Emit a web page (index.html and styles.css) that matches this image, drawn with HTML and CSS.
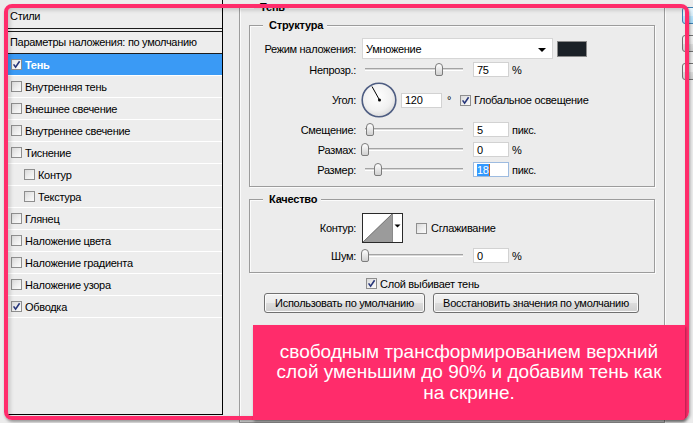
FILE: index.html
```html
<!DOCTYPE html>
<html lang="ru">
<head>
<meta charset="utf-8">
<title>Стиль слоя</title>
<link rel="stylesheet" href="styles.css">
</head>
<body>
<div class="dialog">
  <aside class="styles">
    <div class="styles-head">Стили</div>
    <div class="styles-rule"></div>
    <div class="styles-blend">Параметры наложения: по умолчанию</div>
    <ul class="fx-list">
      <li class="fx selected"><span class="cb"><svg viewBox="0 0 9 9" width="9" height="9"><path d="M1.6 4.4 L3.6 7.2 L7.6 1.2" class="tick"/></svg></span>Тень</li>
      <li class="fx"><span class="cb"></span>Внутренняя тень</li>
      <li class="fx"><span class="cb"></span>Внешнее свечение</li>
      <li class="fx"><span class="cb"></span>Внутреннее свечение</li>
      <li class="fx"><span class="cb"></span>Тиснение</li>
      <li class="fx sub"><span class="cb"></span>Контур</li>
      <li class="fx sub"><span class="cb"></span>Текстура</li>
      <li class="fx"><span class="cb"></span>Глянец</li>
      <li class="fx"><span class="cb"></span>Наложение цвета</li>
      <li class="fx"><span class="cb"></span>Наложение градиента</li>
      <li class="fx"><span class="cb"></span>Наложение узора</li>
      <li class="fx"><span class="cb"><svg viewBox="0 0 9 9" width="9" height="9"><path d="M1.6 4.4 L3.6 7.2 L7.6 1.2" class="tick"/></svg></span>Обводка</li>
    </ul>
  </aside>

  <main class="settings">
    <section class="group outer">
      <div class="group-title outer-title">Тень</div>

      <section class="group inner structure">
        <div class="group-title">Структура</div>

        <div class="row row-blend">
          <span class="lbl">Режим наложения:</span>
          <div class="select"><span class="select-text">Умножение</span><span class="arrow"></span></div>
          <div class="swatch"></div>
        </div>

        <div class="row row-field row-opacity">
          <span class="lbl">Непрозр.:</span>
          <div class="slider"><div class="track"></div><div class="thumb" style="left:75.5%"></div></div>
          <div class="num">75</div><span class="unit">%</span>
        </div>

        <div class="row row-angle">
          <span class="lbl">Угол:</span>
          <svg class="dial" viewBox="0 0 36 36" width="36" height="36">
            <defs>
              <radialGradient id="dialFill" cx="45%" cy="40%" r="60%">
                <stop offset="0" stop-color="#ffffff"/>
                <stop offset="0.7" stop-color="#f1f1f1"/>
                <stop offset="1" stop-color="#dcdcdc"/>
              </radialGradient>
            </defs>
            <circle cx="18" cy="18" r="16.8" fill="url(#dialFill)" stroke="#4e5d82" stroke-width="1.6"/>
            <line x1="18.5" y1="18" x2="11" y2="4.5" stroke="#000" stroke-width="1"/>
            <circle cx="18.5" cy="18" r="1.5" fill="#000"/>
          </svg>
          <div class="num num-angle">120</div>
          <span class="deg">°</span>
          <span class="check check-global"><span class="cb"><svg viewBox="0 0 9 9" width="9" height="9"><path d="M1.6 4.4 L3.6 7.2 L7.6 1.2" class="tick"/></svg></span>Глобальное освещение</span>
        </div>

        <div class="row row-field row-distance">
          <span class="lbl">Смещение:</span>
          <div class="slider"><div class="track"></div><div class="thumb" style="left:5%"></div></div>
          <div class="num">5</div><span class="unit">пикс.</span>
        </div>

        <div class="row row-field row-spread">
          <span class="lbl">Размах:</span>
          <div class="slider"><div class="track"></div><div class="thumb" style="left:0%"></div></div>
          <div class="num">0</div><span class="unit">%</span>
        </div>

        <div class="row row-field row-size">
          <span class="lbl">Размер:</span>
          <div class="slider"><div class="track"></div><div class="thumb" style="left:13.5%"></div></div>
          <div class="num focused"><span class="sel">18</span><span class="caret"></span></div><span class="unit">пикс.</span>
        </div>
      </section>

      <section class="group inner quality">
        <div class="group-title">Качество</div>

        <div class="row row-contour">
          <span class="lbl">Контур:</span>
          <svg class="contour" viewBox="0 0 41 30" width="41" height="30">
            <rect x="0.5" y="0.5" width="40" height="29" fill="#fff" stroke="#2a2a2a"/>
            <polygon points="1,29 30,1 30,29" fill="#9b9b9b"/>
            <line x1="1" y1="29" x2="30" y2="1" stroke="#5a5a5a" stroke-width="0.8"/>
            <line x1="30.5" y1="1" x2="30.5" y2="29" stroke="#8a8a8a"/>
            <polygon points="32.5,11.5 38.5,11.5 35.5,14.5" fill="#000"/>
          </svg>
          <span class="check check-smooth"><span class="cb"></span>Сглаживание</span>
        </div>

        <div class="row row-field row-noise">
          <span class="lbl">Шум:</span>
          <div class="slider"><div class="track"></div><div class="thumb" style="left:0%"></div></div>
          <div class="num">0</div><span class="unit">%</span>
        </div>
      </section>

      <div class="row row-knock">
        <span class="check"><span class="cb"><svg viewBox="0 0 9 9" width="9" height="9"><path d="M1.6 4.4 L3.6 7.2 L7.6 1.2" class="tick"/></svg></span>Слой выбивает тень</span>
      </div>

      <div class="row row-buttons">
        <div class="btn btn-default-use">Использовать по умолчанию</div>
        <div class="btn btn-restore">Восстановить значения по умолчанию</div>
      </div>
    </section>
  </main>

  <div class="side-buttons">
    <div class="side-btn primary"></div>
    <div class="side-btn"></div>
    <div class="side-btn"></div>
  </div>
</div>

<div class="frame"></div>

<div class="callout">
  <p class="callout-text">свободным трансформированием верхний<br>слой уменьшим до 90% и добавим тень как<br>на скрине.</p>
</div>
</body>
</html>
```

FILE: styles.css
```css
* { box-sizing: border-box; }

html, body { margin: 0; padding: 0; }

body {
  width: 693px;
  height: 423px;
  overflow: hidden;
  position: relative;
  background: #f5f5f5;
  font-family: "Liberation Sans", Arial, sans-serif;
  font-size: 11px;
  letter-spacing: -0.3px;
  color: #000;
}

.dialog {
  display: flex;
  height: 423px;
  padding-left: 8px;
  background: #ececec;
}

/* ---------- left styles list ---------- */
.styles {
  flex: none;
  width: 215px;
  height: 415px;
  border-right: 1px solid #000;
  border-bottom: 1px solid #000;
  background: #ededed;
}

.styles-head {
  height: 28px;
  padding: 4px 0 0 2px;
  line-height: 24px;
}

.styles-rule {
  height: 4px;
  border-top: 1px solid #1c1c1c;
  border-bottom: 1px solid #1c1c1c;
}

.styles-blend {
  height: 22px;
  line-height: 21px;
  padding-left: 2px;
  border-bottom: 1px solid #1c1c1c;
}

.fx-list {
  list-style: none;
  margin: 0;
  padding: 0;
}

.fx {
  display: flex;
  align-items: center;
  height: 22px;
  padding-left: 3px;
  border-bottom: 1px solid #fff;
}

.fx.sub { padding-left: 16px; }

.fx.selected {
  background: #3a9af5;
  color: #fff;
  font-weight: bold;
}

.cb {
  flex: none;
  display: flex;
  align-items: center;
  justify-content: center;
  width: 11px;
  height: 11px;
  margin-right: 3px;
  border: 1px solid #8e8e8e;
  background: linear-gradient(135deg, #d9d9d9 0%, #eeeeee 55%, #fbfbfb 100%);
}

.fx.selected .cb { background: linear-gradient(135deg, #e6e6e6, #ffffff); }

.tick {
  fill: none;
  stroke: #27367a;
  stroke-width: 1.6;
}

/* ---------- right settings ---------- */
.settings {
  flex: none;
  margin-left: 16px;
}

.group {
  border: 1px solid #9c9c9c;
  box-shadow: 1px 1px 0 #fbfbfb, inset 1px 1px 0 #fbfbfb;
}

.outer {
  width: 426px;
  height: 416px;
  margin-top: 7px;
}

.inner {
  width: 406px;
  margin-left: 9px;
}

.structure {
  margin-top: 11px;
  padding-bottom: 9px;
}

.quality {
  margin-top: 12px;
  padding-bottom: 9px;
}

.group-title {
  width: fit-content;
  margin: -7px 0 0 13px;
  padding: 0 4px 0 6px;
  line-height: 13px;
  font-weight: bold;
  letter-spacing: -0.2px;
  background: #ececec;
}

.outer-title { margin-left: 14px; }

.row {
  display: flex;
  align-items: center;
}

.lbl {
  flex: none;
  width: 106px;
  text-align: right;
}

.row-blend { height: 21px; margin-top: 6px; }
.row-opacity { margin-top: 3px; }
.row-angle { height: 36px; margin-top: 5px; }
.row-distance { margin-top: 4px; }
.row-spread { margin-top: 5px; }
.row-size { margin-top: 5px; }
.row-field { height: 15px; }

.select {
  flex: none;
  position: relative;
  display: flex;
  align-items: center;
  width: 191px;
  height: 21px;
  margin-left: 6px;
  padding-left: 3px;
  background: #fff;
  border: 1px solid #d6d6d6;
}

.arrow {
  position: absolute;
  right: 6px;
  top: 9px;
  width: 0;
  height: 0;
  border-left: 4px solid transparent;
  border-right: 4px solid transparent;
  border-top: 4px solid #000;
}

.swatch {
  flex: none;
  width: 30px;
  height: 16px;
  margin-left: 4px;
  background: #1b2127;
  border: 1px solid #8a8a8a;
}

.slider {
  flex: none;
  position: relative;
  width: 98px;
  height: 15px;
  margin-left: 9px;
}

.track {
  margin-top: 6px;
  height: 3px;
  border-top: 1px solid #a3a3a3;
  border-bottom: 1px solid #ffffff;
  background: #d8d8d8;
}

.thumb {
  position: absolute;
  top: 1px;
  width: 8px;
  height: 13px;
  margin-left: -4px;
  border: 1px solid #7c7c7c;
  border-radius: 4px 4px 2px 2px;
  background: linear-gradient(#ffffff, #d0d0d0);
}

.num {
  flex: none;
  display: flex;
  align-items: center;
  width: 36px;
  height: 15px;
  margin-left: 10px;
  padding-left: 3px;
  background: #fff;
  border: 1px solid #d2d2d2;
}

.num.focused { border-color: #9dbbe0; }

.sel {
  background: #3399ff;
  color: #fff;
  line-height: 12px;
}

.caret {
  width: 1px;
  height: 12px;
  background: #c8641c;
}

.unit {
  margin-left: 3px;
}

.dial {
  flex: none;
  margin-left: 5px;
}

.num-angle {
  width: 41px;
  margin-left: 4px;
}

.deg {
  width: 5px;
  margin-left: 5px;
}

.check {
  display: flex;
  align-items: center;
}

.check-global { margin-left: 8px; }

.row-contour { height: 30px; margin-top: 7px; }
.row-noise { margin-top: 5px; }

.contour {
  flex: none;
  margin-left: 6px;
}

.check-smooth { margin-left: 13px; }
.check-smooth .cb { margin-right: 4px; }

.row-knock {
  height: 13px;
  margin-top: 4px;
  padding-left: 126px;
}

.row-buttons {
  margin-top: 3px;
  padding-left: 24px;
  gap: 8px;
}

.btn {
  flex: none;
  display: flex;
  align-items: center;
  justify-content: center;
  height: 20px;
  border: 1px solid #707070;
  border-radius: 3px;
  background: linear-gradient(#f3f3f3 0%, #ebebeb 50%, #dddddd 51%, #cfcfcf 100%);
  box-shadow: inset 0 0 0 1px #fbfbfb;
}

.btn-default-use { width: 161px; }
.btn-restore { width: 206px; }

.side-buttons {
  flex: none;
  display: flex;
  flex-direction: column;
  gap: 11px;
  width: 11px;
  overflow: hidden;
  margin-left: 17px;
  padding-top: 7px;
}

.side-btn {
  flex: none;
  width: 40px;
  height: 17px;
  border: 1px solid #707070;
  border-radius: 3px;
  background: linear-gradient(#f3f3f3 0%, #ebebeb 50%, #dddddd 51%, #cfcfcf 100%);
}

.side-btn.primary {
  border-color: #3c7fb1;
  background: linear-gradient(#eaf6fd 0%, #d9f0fc 50%, #bee6fd 51%, #a7d9f5 100%);
}

/* ---------- overlays ---------- */
.frame {
  position: absolute;
  left: 4px;
  top: 4px;
  width: 685px;
  height: 416px;
  border: 4px solid #ff2c6b;
  border-radius: 8px;
  box-shadow: 1px 2px 3px rgba(0, 0, 0, 0.35), inset 2px 2px 4px rgba(0, 0, 0, 0.18);
  pointer-events: none;
}

.callout {
  position: absolute;
  left: 253px;
  top: 325px;
  width: 432px;
  height: 95px;
  display: flex;
  align-items: center;
  justify-content: center;
  background: #ff2c6b;
  box-shadow: 1px 2px 3px rgba(0, 0, 0, 0.35);
  border-radius: 0 0 3px 0;
}

.callout-text {
  margin: 0;
  color: #fff;
  font-family: "Liberation Sans", Arial, sans-serif;
  font-size: 19px;
  letter-spacing: 0;
  line-height: 20.6px;
  text-align: center;
}
```
